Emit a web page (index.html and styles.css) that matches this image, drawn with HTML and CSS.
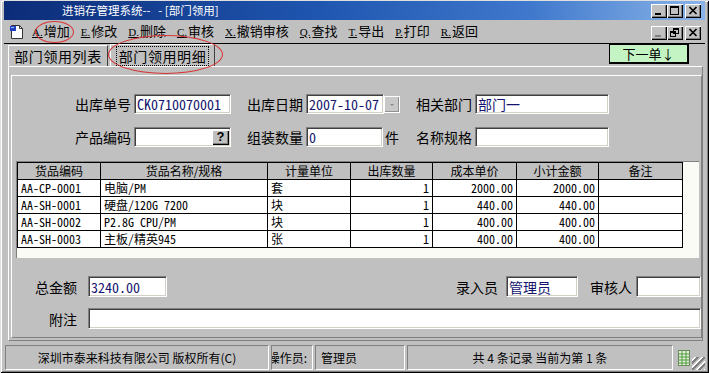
FILE: index.html
```html
<!DOCTYPE html>
<html lang="zh-CN">
<head>
  <meta charset="UTF-8">
  <title>部门领用</title>
  <link rel="stylesheet" href="styles.css">
</head>
<body>
  <div class="window">
    <!-- 标题栏 -->
    <div class="titlebar">
      <span class="title">进销存管理系统--&nbsp;&nbsp;&nbsp;- [部门领用]</span>
      <div class="caption-btns">
        <span class="cbtn"><svg width="14" height="12" viewBox="0 0 14 12"><rect x="3" y="8" width="6" height="2"/></svg></span>
        <span class="cbtn"><svg width="14" height="12" viewBox="0 0 14 12"><path fill-rule="evenodd" d="M2 1h9v9H2z M3 3h7v6H3z"/></svg></span>
        <span class="cbtn cbtn--close"><svg width="14" height="12" viewBox="0 0 14 12"><path d="M3.5 2l7 7M10.5 2l-7 7" stroke="#000" stroke-width="1.7"/></svg></span>
      </div>
    </div>

    <!-- 工具栏 -->
    <div class="toolbar">
      <svg class="doc-icon" width="16" height="16" viewBox="0 0 16 16">
        <path d="M2.5 1.5h8l3 3v10h-11z" fill="#fff" stroke="#333"/>
        <path d="M10.5 1.5v3h3" fill="none" stroke="#333"/>
        <rect x="1" y="2" width="6" height="5" fill="#2040c0"/>
        <rect x="2" y="3" width="3" height="1" fill="#9fc0ff"/>
      </svg>
      <a class="tool"><span class="key">A.</span>增加</a>
      <a class="tool"><span class="key">E.</span>修改</a>
      <a class="tool"><span class="key">D.</span>删除</a>
      <a class="tool"><span class="key">C.</span>审核</a>
      <a class="tool"><span class="key">X.</span>撤销审核</a>
      <a class="tool"><span class="key">Q.</span>查找</a>
      <a class="tool"><span class="key">T.</span>导出</a>
      <a class="tool"><span class="key">P.</span>打印</a>
      <a class="tool"><span class="key">R.</span>返回</a>
      <div class="caption-btns caption-btns--mdi">
        <span class="cbtn"><svg width="14" height="12" viewBox="0 0 14 12"><rect x="3" y="8" width="6" height="2" fill="#808080"/></svg></span>
        <span class="cbtn"><svg width="14" height="12" viewBox="0 0 14 12"><path fill-rule="evenodd" d="M5 1h6v6H5z M6 3h4v3H6z"/><path fill-rule="evenodd" d="M2 4h6v6H2z M3 6h4v3H3z"/></svg></span>
        <span class="cbtn cbtn--close"><svg width="14" height="12" viewBox="0 0 14 12"><path d="M3.5 2l7 7M10.5 2l-7 7" stroke="#000" stroke-width="1.7"/></svg></span>
      </div>
    </div>

    <!-- 选项卡 -->
    <div class="tabstrip">
      <div class="tab">部门领用列表</div>
      <div class="tab tab--active"><span class="focus">部门领用明细</span></div>
      <div class="next-btn">下一单↓</div>
    </div>

    <div class="page">
      <div class="panel">
        <div class="form">
          <label class="lbl">出库单号</label>
          <div class="field"><span class="input input--w97">CK0710070001</span></div>
          <label class="lbl">出库日期</label>
          <div class="field"><span class="input input--w78">2007-10-07</span><span class="drop"></span></div>
          <label class="lbl">相关部门</label>
          <div class="field"><span class="input input--w134">部门一</span></div>

          <label class="lbl">产品编码</label>
          <div class="field"><span class="input input--w97 input--pick"><span class="pick">?</span></span></div>
          <label class="lbl">组装数量</label>
          <div class="field"><span class="input input--w77">0</span><span class="unit">件</span></div>
          <label class="lbl">名称规格</label>
          <div class="field"><span class="input input--w134"></span></div>
        </div>

        <div class="grid">
          <table>
            <colgroup>
              <col style="width:83px"><col style="width:167px"><col style="width:83px"><col style="width:82px"><col style="width:84px"><col style="width:82px"><col style="width:84px">
            </colgroup>
            <thead>
              <tr><th>货品编码</th><th>货品名称/规格</th><th>计量单位</th><th>出库数量</th><th>成本单价</th><th>小计金额</th><th>备注</th></tr>
            </thead>
            <tbody>
              <tr><td>AA-CP-0001</td><td>电脑/PM</td><td>套</td><td class="num">1</td><td class="num">2000.00</td><td class="num">2000.00</td><td></td></tr>
              <tr><td>AA-SH-0001</td><td>硬盘/120G 7200</td><td>块</td><td class="num">1</td><td class="num">440.00</td><td class="num">440.00</td><td></td></tr>
              <tr><td>AA-SH-0002</td><td>P2.8G CPU/PM</td><td>块</td><td class="num">1</td><td class="num">400.00</td><td class="num">400.00</td><td></td></tr>
              <tr><td>AA-SH-0003</td><td>主板/精英945</td><td>张</td><td class="num">1</td><td class="num">400.00</td><td class="num">400.00</td><td></td></tr>
            </tbody>
          </table>
        </div>

        <div class="totals">
          <label class="lbl lbl--left">总金额</label>
          <span class="input input--w79">3240.00</span>
          <label class="lbl lbl--push">录入员</label>
          <span class="input input--w72">管理员</span>
          <label class="lbl lbl--gap">审核人</label>
          <span class="input input--w65"></span>
        </div>

        <div class="memo">
          <label class="lbl lbl--left">附注</label>
          <span class="input input--fill"></span>
        </div>
      </div>
    </div>

    <!-- 状态栏 -->
    <div class="statusbar">
      <div class="sb sb--copy">深圳市泰来科技有限公司 版权所有(C)</div>
      <div class="sb sb--op">操作员:</div>
      <div class="sb sb--user">管理员</div>
      <div class="sb sb--rec">共 4 条记录 当前为第 1 条</div>
      <svg class="sb-icon" width="12" height="16" viewBox="0 0 12 16">
        <rect x="0.5" y="0.5" width="11" height="15" fill="#e8f0e0" stroke="#6a8a5a"/>
        <path d="M1 4h10M1 7h10M1 10h10M1 13h10M4 1v14M8 1v14" stroke="#4a9a3a" stroke-width="1"/>
      </svg>
      <span class="grip"></span>
    </div>

    <span class="mark mark--add"></span>
    <span class="mark mark--tab"></span>
  </div>
</body>
</html>
```

FILE: styles.css
```css
body {
  margin: 0;
  width: 709px;
  height: 373px;
  overflow: hidden;
  background: #c0c0c0;
  font-family: "Noto Sans CJK SC", "Liberation Sans", sans-serif;
  color: #000;
}

.window {
  position: relative;
  display: flex;
  flex-direction: column;
  height: 373px;
  padding: 1px 4px 3px 4px;
  box-sizing: border-box;
  box-shadow: inset 1px 1px #dfdfdf, inset -1px -1px #000, inset 2px 2px #fff, inset -2px -2px #808080;
}

/* 标题栏 */
.titlebar {
  display: flex;
  align-items: center;
  height: 19px;
  padding: 0 4px 0 58px;
  background: linear-gradient(90deg, #0c2c78 0%, #1f56b0 45%, #3f78cc 75%, #8ab4e8 100%);
  color: #fff;
}

.title {
  font-size: 11.5px;
  line-height: 19px;
  white-space: nowrap;
}

.caption-btns {
  display: flex;
  margin-left: auto;
}

.cbtn {
  display: flex;
  align-items: center;
  justify-content: center;
  width: 16px;
  height: 14px;
  box-sizing: border-box;
  background: #c0c0c0;
  box-shadow: inset 1px 1px #fff, inset -1px -1px #000, inset -2px -2px #808080;
}

.cbtn--close {
  margin-left: 2px;
}

/* 工具栏 */
.toolbar {
  display: flex;
  align-items: center;
  height: 24px;
  padding: 0 4px 0 5px;
  box-sizing: border-box;
  border-bottom: 1px solid #000;
}

.doc-icon {
  margin-right: 7px;
}

.tool {
  display: flex;
  align-items: baseline;
  margin-right: 11px;
  font-size: 13px;
  line-height: 16px;
  white-space: nowrap;
}

.key {
  margin-right: 1px;
  font-family: "Liberation Serif", serif;
  font-size: 11px;
  text-decoration: underline;
}

.caption-btns--mdi {
  align-self: center;
  margin-top: 2px;
}

/* 选项卡 */
.tabstrip {
  display: flex;
  height: 22px;
  padding-left: 4px;
}

.tab {
  display: flex;
  align-items: center;
  justify-content: center;
  width: 100px;
  margin-top: 1px;
  box-sizing: border-box;
  border-left: 1px solid #fff;
  border-top: 1px solid #fff;
  border-right: 1px solid #404040;
  font-size: 14px;
  letter-spacing: 0.6px;
  line-height: 18px;
  white-space: nowrap;
}

.tab--active {
  width: 105px;
  margin-left: 2px;
  margin-top: 0;
}

.focus {
  padding: 0 2px;
  outline: 1px dotted #000;
}

.next-btn {
  display: flex;
  align-items: center;
  justify-content: center;
  width: 80px;
  height: 20px;
  margin-left: auto;
  margin-right: 16px;
  box-sizing: border-box;
  border: 1px solid #000;
  border-right-width: 2px;
  border-bottom-width: 2px;
  background: #c4f4c4;
  font-size: 13px;
}

/* 明细页 */
.page {
  flex: 1;
  display: flex;
  margin: 0 2px 2px 4px;
  padding-top: 8px;
  border-top: 1px solid #fff;
  border-left: 1px solid #fff;
  border-right: 1px solid #808080;
  border-bottom: 1px solid #808080;
}

.panel {
  flex: 1;
  margin: 0 0 2px 2px;
  padding-top: 18px;
  border-top: 1px solid #fff;
  border-left: 1px solid #fff;
  border-right: 1px solid #808080;
  border-bottom: 1px solid #808080;
}

.form {
  display: grid;
  grid-template-columns: 122px 97px 75px 94px 75px 134px;
  grid-auto-rows: 20px;
  row-gap: 13px;
}

.lbl {
  display: flex;
  align-items: center;
  justify-content: flex-end;
  padding-right: 3px;
  font-size: 14px;
  line-height: 20px;
  white-space: nowrap;
}

.field {
  display: flex;
  align-items: center;
}

.input {
  display: flex;
  align-items: center;
  height: 20px;
  padding-left: 2px;
  box-sizing: border-box;
  background: #fff;
  border-top: 1px solid #808080;
  border-left: 1px solid #808080;
  border-right: 1px solid #fff;
  border-bottom: 1px solid #fff;
  box-shadow: inset 1px 1px #404040, inset -1px -1px #d4d0c8;
  color: #14146e;
  font-family: "Noto Sans Mono CJK SC", "Liberation Mono", "Noto Sans CJK SC", monospace;
  font-size: 14px;
  line-height: 18px;
  white-space: nowrap;
  overflow: hidden;
}

.input--w97 { width: 97px; }
.input--w78 { width: 78px; }
.input--w77 { width: 77px; }
.input--w134 { width: 134px; }
.input--w79 { width: 79px; height: 21px; }
.input--w72 { width: 72px; height: 21px; }
.input--w65 { width: 65px; height: 21px; }
.input--fill { flex: 1; height: 21px; }

.input--pick {
  justify-content: flex-end;
  padding: 0 1px 0 0;
}

.pick {
  display: flex;
  align-items: center;
  justify-content: center;
  width: 17px;
  height: 15px;
  background: #c0c0c0;
  box-shadow: inset 1px 1px #fff, inset -1px -1px #000, inset -2px -2px #808080;
  color: #000;
  font-family: "Liberation Sans", sans-serif;
  font-size: 13px;
  font-weight: bold;
}

.drop {
  position: relative;
  width: 16px;
  height: 17px;
  margin-left: 0;
  box-sizing: border-box;
  background: #c8c8c8;
  border: 1px solid #fff;
  box-shadow: inset -1px -1px #909090;
}

.drop::after {
  content: '';
  position: absolute;
  left: 5px;
  top: 7px;
  border-left: 2px solid transparent;
  border-right: 2px solid transparent;
  border-top: 2px solid #888;
}

.unit {
  margin-left: 2px;
  font-size: 14px;
}

/* 明细表格 */
.grid {
  height: 97px;
  margin: 14px 2px 0 4px;
  box-sizing: border-box;
  border-top: 1px solid #808080;
  border-left: 1px solid #808080;
  background: #fbfbf5;
}

.grid table {
  border-collapse: collapse;
  table-layout: fixed;
  width: 665px;
  font-size: 12px;
}

.grid th,
.grid td {
  height: 16px;
  padding: 0 3px;
  border: 1px solid #000;
  line-height: 16px;
  white-space: nowrap;
  overflow: hidden;
}

.grid th {
  background: #c0c0c0;
  font-weight: normal;
  text-align: center;
  font-family: "Noto Sans CJK SC", sans-serif;
}

.grid td {
  background: #fff;
  font-family: "Noto Sans Mono CJK SC", "Liberation Mono", "Noto Sans CJK SC", monospace;
  text-align: left;
}

.grid td.num {
  text-align: right;
}

/* 合计 */
.totals,
.memo {
  display: flex;
  align-items: center;
  height: 21px;
}

.totals {
  margin-top: 18px;
}

.memo {
  margin-top: 11px;
}

.lbl--left {
  width: 65px;
  margin-right: 11px;
  padding-right: 0;
  box-sizing: border-box;
}

.lbl--push {
  margin-left: auto;
  margin-right: 8px;
  padding-right: 0;
}

.lbl--gap {
  margin-left: 12px;
  margin-right: 4px;
  padding-right: 0;
}

/* 状态栏 */
.statusbar {
  position: relative;
  display: flex;
  align-items: stretch;
  gap: 2px;
  height: 25px;
  margin-top: 2px;
  padding-left: 1px;
}

.sb {
  display: flex;
  align-items: center;
  justify-content: center;
  box-sizing: border-box;
  border-top: 1px solid #808080;
  border-left: 1px solid #808080;
  border-right: 1px solid #fff;
  border-bottom: 1px solid #fff;
  font-size: 12px;
  white-space: nowrap;
  overflow: hidden;
}

.sb--copy { width: 264px; }
.sb--op { width: 42px; justify-content: flex-end; padding-right: 5px; }
.sb--user { width: 90px; justify-content: flex-start; padding-left: 5px; }
.sb--rec { width: 266px; }

.sb-icon {
  align-self: center;
  margin-left: 3px;
}

.grip {
  width: 13px;
  height: 13px;
  align-self: flex-end;
  margin-left: auto;
  background: repeating-linear-gradient(135deg, transparent 0 2px, #fff 2px 3px, #808080 3px 5px);
}

/* 红色圈注 */
.mark {
  position: absolute;
  border: 1.5px solid #d83434;
  border-radius: 50%;
  pointer-events: none;
}

.mark--add {
  left: 35px;
  top: 21px;
  width: 37px;
  height: 20px;
}

.mark--tab {
  left: 108px;
  top: 35px;
  width: 113px;
  height: 37px;
}
```
